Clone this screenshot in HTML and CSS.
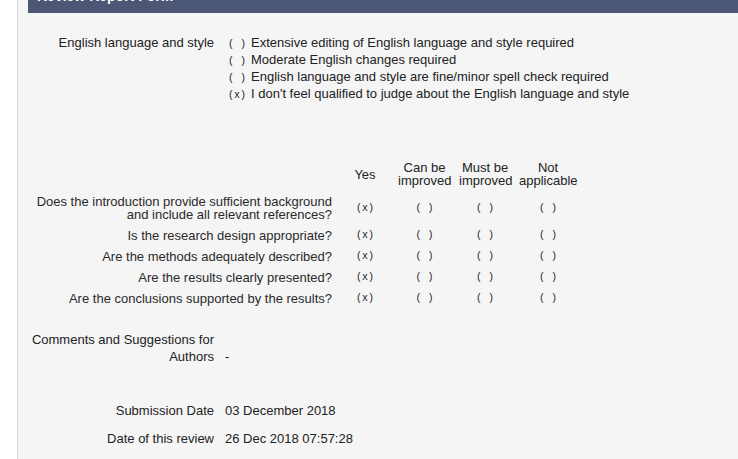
FILE: index.html
```html
<!DOCTYPE html>
<html lang="en">
<head>
<meta charset="utf-8">
<title>Review Report Form</title>
<link rel="stylesheet" href="styles.css">
</head>
<body>
<div class="panel">
  <div class="panel-head">Review Report Form</div>
  <div class="panel-body">
    <div class="field english">
      <div class="label">English language and style</div>
      <ul class="options">
        <li><span class="mark">( )</span>Extensive editing of English language and style required</li>
        <li><span class="mark">( )</span>Moderate English changes required</li>
        <li><span class="mark">( )</span>English language and style are fine/minor spell check required</li>
        <li><span class="mark">(x)</span>I don't feel qualified to judge about the English language and style</li>
      </ul>
    </div>

    <div class="quality">
      <div class="q-head"></div>
      <div class="q-head">Yes</div>
      <div class="q-head">Can be<br>improved</div>
      <div class="q-head">Must be<br>improved</div>
      <div class="q-head">Not<br>applicable</div>

      <div class="q-text">Does the introduction provide sufficient background<br>and include all relevant references?</div>
      <div class="q-mark">(x)</div><div class="q-mark">( )</div><div class="q-mark">( )</div><div class="q-mark">( )</div>

      <div class="q-text">Is the research design appropriate?</div>
      <div class="q-mark">(x)</div><div class="q-mark">( )</div><div class="q-mark">( )</div><div class="q-mark">( )</div>

      <div class="q-text">Are the methods adequately described?</div>
      <div class="q-mark">(x)</div><div class="q-mark">( )</div><div class="q-mark">( )</div><div class="q-mark">( )</div>

      <div class="q-text">Are the results clearly presented?</div>
      <div class="q-mark">(x)</div><div class="q-mark">( )</div><div class="q-mark">( )</div><div class="q-mark">( )</div>

      <div class="q-text">Are the conclusions supported by the results?</div>
      <div class="q-mark">(x)</div><div class="q-mark">( )</div><div class="q-mark">( )</div><div class="q-mark">( )</div>
    </div>

    <div class="field comments">
      <div class="label">Comments and Suggestions for Authors</div>
      <div class="value bottom">-</div>
    </div>

    <div class="field date first">
      <div class="label">Submission Date</div>
      <div class="value">03 December 2018</div>
    </div>

    <div class="field date">
      <div class="label">Date of this review</div>
      <div class="value">26 Dec 2018 07:57:28</div>
    </div>
  </div>
</div>
</body>
</html>
```

FILE: styles.css
```css
html, body {
  margin: 0;
  padding: 0;
  background: #ffffff;
}

body {
  font-family: "Liberation Sans", Arial, sans-serif;
  font-size: 13px;
  color: #222222;
  overflow: hidden;
}

.panel {
  margin-left: 17px;
  margin-top: -20px;
  border-left: 1px solid #d9d9d9;
  background: #f5f5f5;
  padding-left: 10px;
  min-height: 520px;
}

.panel-head {
  height: 33px;
  line-height: 33px;
  background: #4c5675;
  color: #ffffff;
  font-weight: bold;
  font-size: 14px;
  padding-left: 9px;
}

.panel-body {
  padding-top: 21px;
}

.field {
  display: grid;
  grid-template-columns: 186px 1fr;
  column-gap: 11px;
  line-height: 17px;
}

.label {
  text-align: right;
}

.options {
  list-style: none;
  margin: 0;
  padding: 0 0 0 3px;
}

.options li {
  height: 17px;
}

.mark {
  display: inline-block;
  font-family: "Liberation Mono", "Courier New", monospace;
  font-size: 10px;
  line-height: 10px;
  width: 23px;
}

.quality {
  display: grid;
  grid-template-columns: 304px 50px 53px 52px 58px;
  column-gap: 8px;
  line-height: 13px;
  margin-top: 55px;
}

.q-head {
  text-align: center;
  padding: 4px 0;
  align-self: center;
}

.q-text {
  text-align: right;
  padding: 4px 0;
  color: #2a2a2a;
}

.q-mark {
  text-align: center;
  align-self: center;
  font-family: "Liberation Mono", "Courier New", monospace;
  font-size: 10px;
}

.comments {
  margin-top: 22px;
}

.value.bottom {
  align-self: end;
}

.date.first {
  margin-top: 37px;
}

.date + .date {
  margin-top: 11px;
}
```
